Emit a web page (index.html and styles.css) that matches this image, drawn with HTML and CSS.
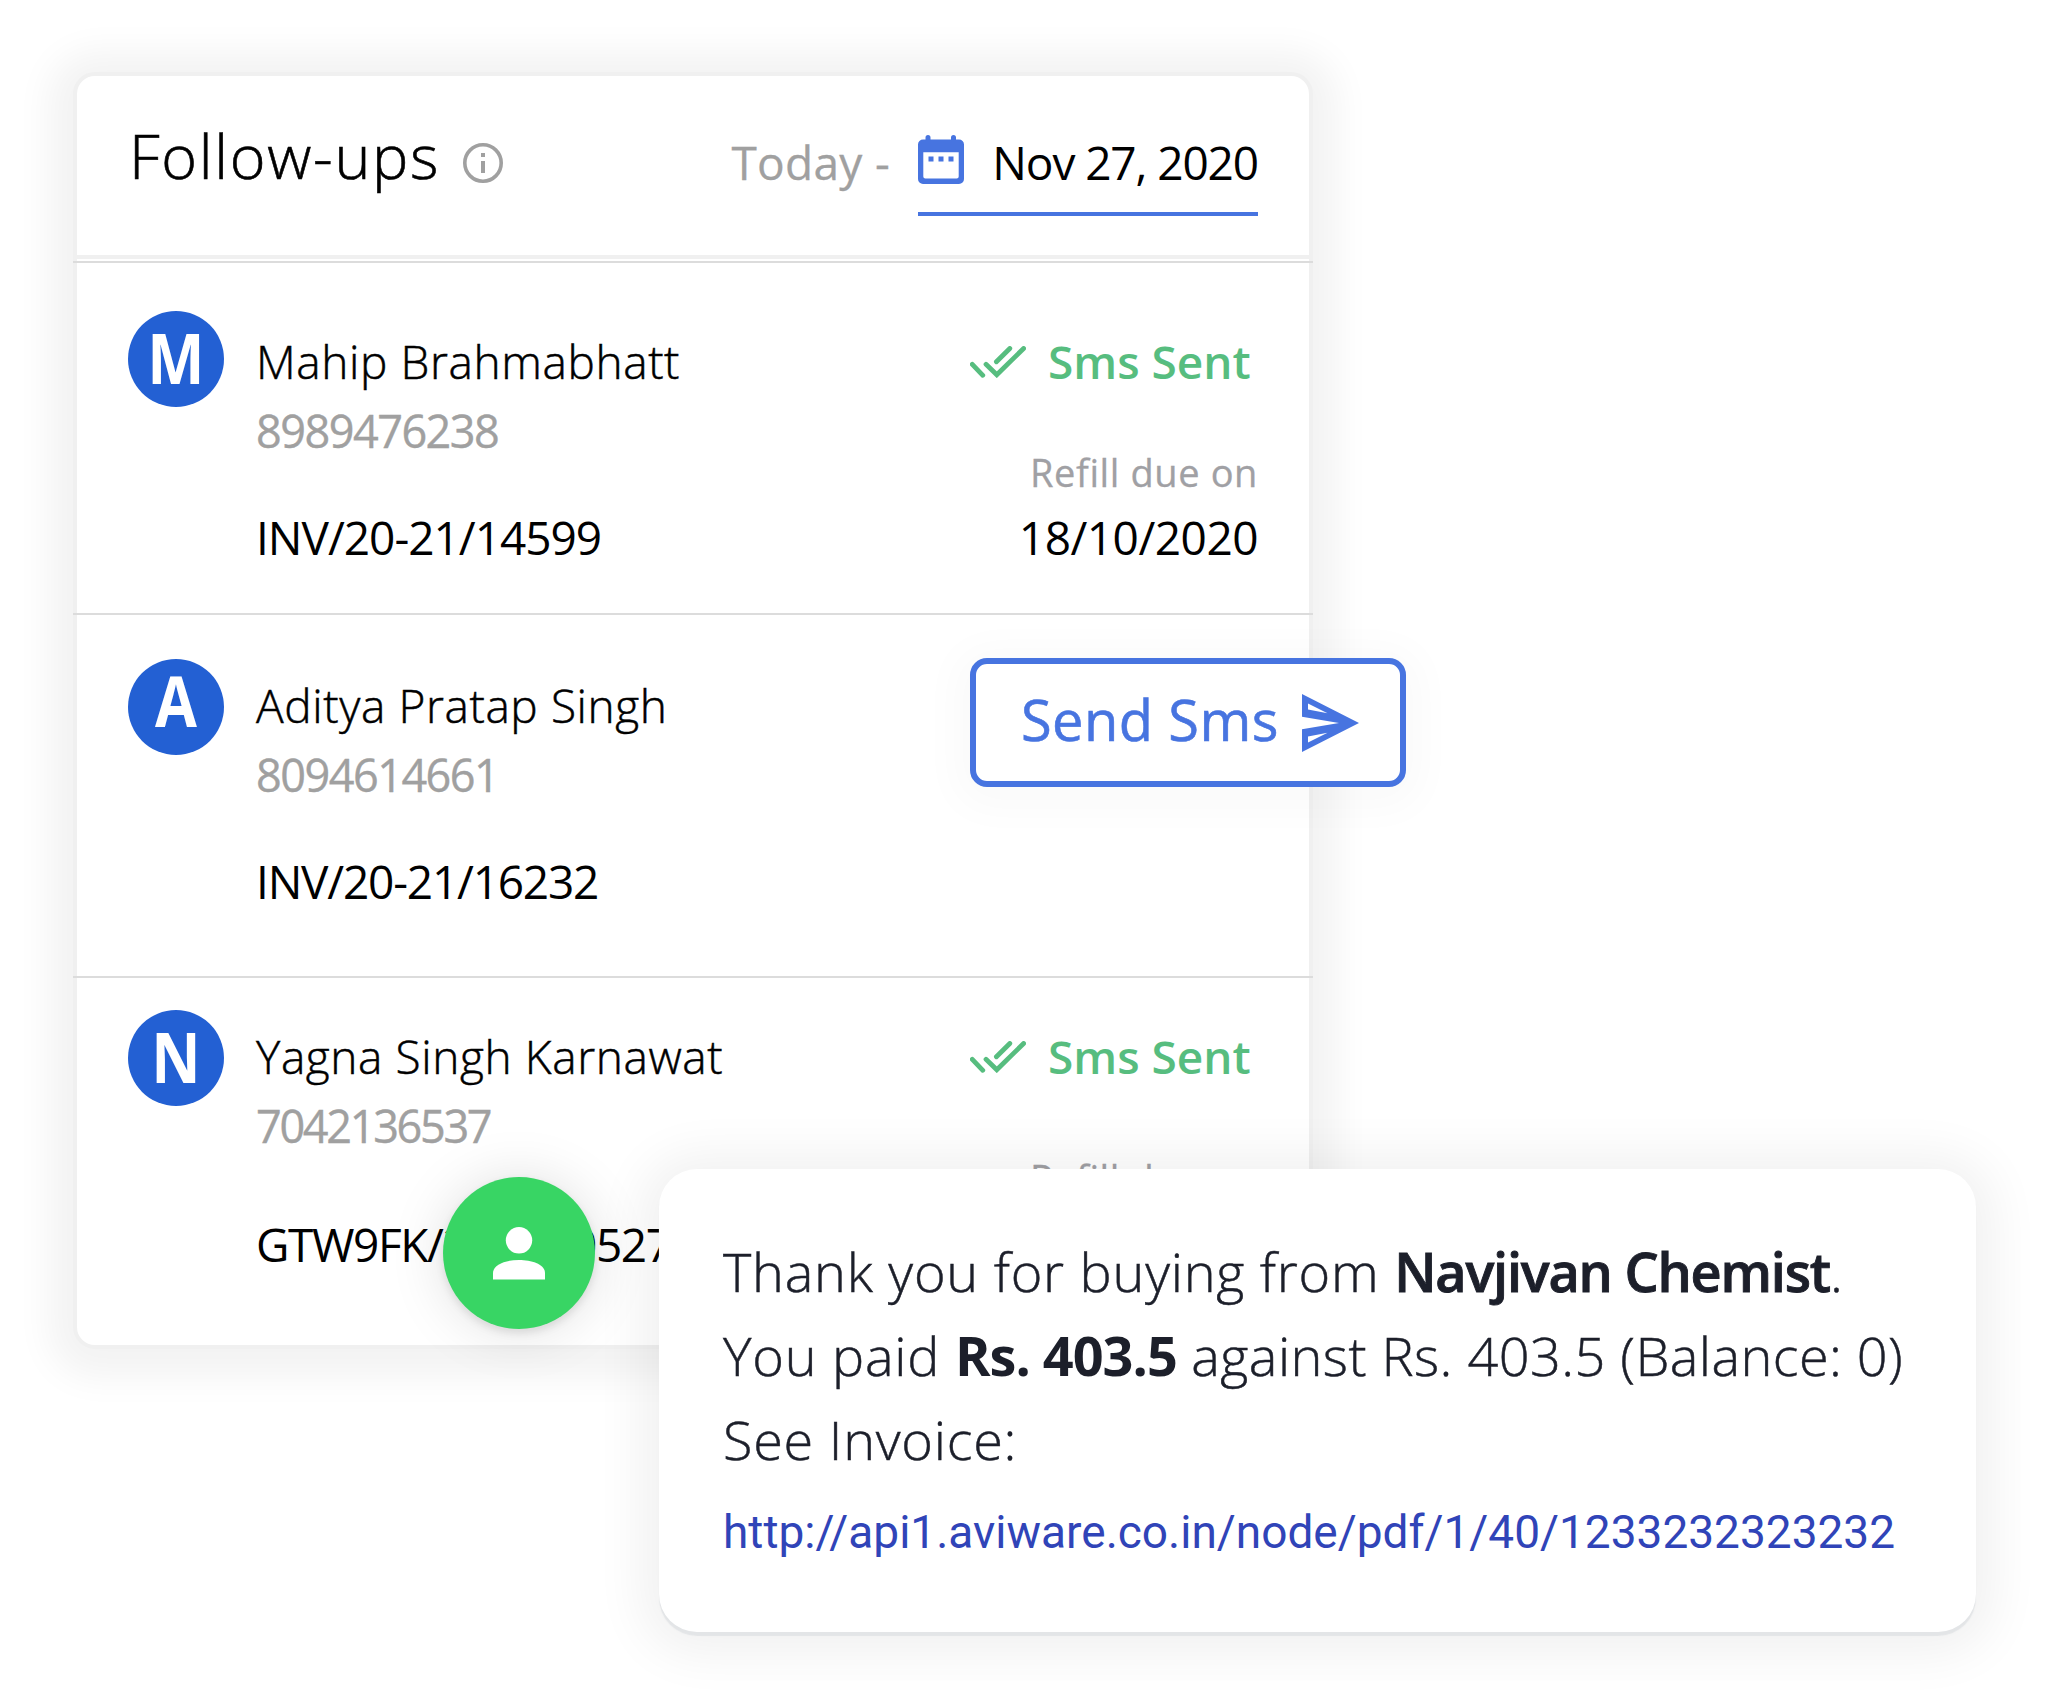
FILE: index.html
```html
<!DOCTYPE html>
<html lang="en">
<head>
<meta charset="utf-8">
<title>Follow-ups</title>
<link rel="stylesheet" href="styles.css">
</head>
<body>
<svg width="0" height="0" class="defs" aria-hidden="true">
  <symbol id="double-check" viewBox="0 0 56 32">
    <g fill="none" stroke="currentColor" stroke-width="4.8" stroke-linecap="round" stroke-linejoin="miter">
      <path d="M2.3 18.3 12.8 29.3"/>
      <path d="M16 18.3 26.8 28.8 53.6 2.5"/>
      <path d="M26.4 15.8 39.8 2.5"/>
    </g>
  </symbol>
</svg>
<main class="stage">
  <section class="card">
    <header class="card-header">
      <h1 class="title">Follow-ups</h1>
      <svg class="info-icon" viewBox="0 0 40 40" width="40" height="40">
        <circle cx="20" cy="20" r="18.2" fill="none" stroke="#a0a0a0" stroke-width="3.6"/>
        <rect x="18" y="18" width="4" height="12" fill="#a0a0a0"/>
        <rect x="18" y="10" width="4" height="4" fill="#a0a0a0"/>
      </svg>
      <span class="today">Today -</span>
      <div class="date-field">
        <svg class="calendar" viewBox="0 0 46 49" width="46" height="49" fill="#4774e0">
          <path fill-rule="evenodd" d="M7.5 4.5V2.5a2.5 2.5 0 0 1 5 0v2H33V2.5a2.5 2.5 0 0 1 5 0v2h3a5 5 0 0 1 5 5V44a5 5 0 0 1-5 5H5a5 5 0 0 1-5-5V9.500a5 5 0 0 1 5-5zM5.300 17.300V41.500a2 2 0 0 0 2 2H38.700a2 2 0 0 0 2-2V17.300z"/>
          <path d="M10.500 21.500h5v5h-5zM20.500 21.500h5v5h-5zM30.500 21.500h5v5h-5z"/>
        </svg>
        <span class="date">Nov 27, 2020</span>
      </div>
    </header>

    <article class="row row-1">
      <div class="avatar"><span>M</span></div>
      <div class="person">
        <div class="name">Mahip Brahmabhatt</div>
        <div class="phone">8989476238</div>
        <div class="invoice">INV/20-21/14599</div>
      </div>
      <div class="status">
        <div class="sent"><svg width="56" height="32"><use href="#double-check"/></svg><span>Sms Sent</span></div>
        <div class="due">Refill due on</div>
        <div class="due-date">18/10/2020</div>
      </div>
    </article>

    <article class="row row-2">
      <div class="avatar"><span>A</span></div>
      <div class="person">
        <div class="name">Aditya Pratap Singh</div>
        <div class="phone">8094614661</div>
        <div class="invoice">INV/20-21/16232</div>
      </div>
    </article>

    <article class="row row-3">
      <div class="avatar"><span>N</span></div>
      <div class="person">
        <div class="name">Yagna Singh Karnawat</div>
        <div class="phone">7042136537</div>
        <div class="invoice">GTW9FK/20-21/0527</div>
      </div>
      <div class="status">
        <div class="sent"><svg width="56" height="32"><use href="#double-check"/></svg><span>Sms Sent</span></div>
        <div class="due">Refill due on</div>
      </div>
    </article>
  </section>

  <button class="send">
    <span>Send Sms</span>
    <svg viewBox="0 0 57 58" width="57" height="58" fill="#4774e0">
      <path fill-rule="evenodd" d="M0 0 57 29 0 58V35.300L37 29 0 22.700zM6 9.500V15.500L25.500 19.300zM6 48.500V42.500L25.500 38.700z"/>
    </svg>
  </button>

  <div class="fab">
    <svg viewBox="0 0 52 53" width="52" height="53" fill="#fff">
      <circle cx="26" cy="13.300" r="13.200"/>
      <path d="M0 52.500V46C0 37.500 13 33 26 33s26 4.500 26 13v6.500z"/>
    </svg>
  </div>

  <section class="message">
    <p><span class="s1">Thank you for buying from </span><b class="shop">Navjivan Chemist</b>.</p>
    <p><span class="s1">You paid </span><b class="paid">Rs. 403.5</b><span class="s2"> against Rs. 403.5 (Balance: 0)</span></p>
    <p><span class="s1">See Invoice:</span></p>
    <a class="link">http://api1.aviware.co.in/node/pdf/1/40/1233232323232</a>
  </section>
</main>
</body>
</html>
```
FILE: styles.css
```css
* { box-sizing: border-box; }

body {
  margin: 0;
  background: #fff;
  color: #000;
  font-family: "Open Sans", "Noto Sans", sans-serif;
}

.defs { position: absolute; }

.stage {
  position: relative;
  width: 2048px;
  height: 1704px;
  padding: 72px 0 0 73px;
  overflow: hidden;
}

svg { display: block; flex: none; }

/* Follow-up list */
.card {
  width: 1240px;
  height: 1277px;
  border: 4px solid #f0f0f0;
  border-radius: 22px;
  background: #fff;
  box-shadow: 0 4px 36px 24px rgba(0, 0, 0, .05);
}

.card-header {
  display: flex;
  align-items: flex-start;
  height: 183px;
  padding: 0 51px 0 52px;
  border-bottom: 4px solid #f0f0f0;
  white-space: nowrap;
}

.title {
  width: 334px;
  margin: 39px 0 0;
  font-size: 61px;
  font-weight: 300;
  line-height: 82px;
  letter-spacing: 1.7px;
  -webkit-text-stroke: .6px;
}

.info-icon { margin-top: 67px; }

.today {
  margin: 52px 0 0 auto;
  color: #a0a0a0;
  font-size: 46px;
  line-height: 68px;
  letter-spacing: .3px;
  -webkit-text-stroke: .3px;
}

.date-field {
  display: flex;
  justify-content: space-between;
  width: 340px;
  height: 140px;
  margin-left: 28px;
  border-bottom: 4px solid #4774e0;
}

.calendar { margin-top: 59px; }

.date {
  margin-top: 52px;
  font-size: 46px;
  line-height: 68px;
  letter-spacing: -1.1px;
  font-weight: 500;
}

.row {
  display: flex;
  align-items: flex-start;
  margin: 0 -4px;
  border-top: 2px solid #dcdcdc;
  padding: 0 55px 0 55px;
  white-space: nowrap;
}

.row-1 { height: 352px; margin-top: 2px; padding-top: 48px; }
.row-2 { height: 363px; padding-top: 44px; }
.row-3 { height: 367px; padding-top: 32px; }

.avatar {
  width: 96px;
  height: 96px;
  border-radius: 50%;
  background: #2360d3;
  color: #fff;
  font-size: 69px;
  font-weight: 700;
  line-height: 92px;
  text-align: center;
}

.avatar span { display: block; transform: scaleX(.88); }
.row-2 .avatar { line-height: 82px; }

.person { margin: 16px 0 0 32px; }
.row-2 .person, .row-3 .person { margin-top: 12px; }

.name {
  font-size: 46px;
  font-weight: 300;
  line-height: 69px;
  letter-spacing: .6px;
  -webkit-text-stroke: .5px;
}

.phone {
  color: #a0a0a0;
  font-size: 45px;
  line-height: 69px;
  letter-spacing: -1.5px;
  -webkit-text-stroke: .4px;
}

.row-3 .phone { letter-spacing: -2.3px; }

.invoice {
  margin-top: 38px;
  font-size: 46px;
  font-weight: 500;
  line-height: 69px;
  letter-spacing: -1px;
}

.row-2 .invoice { letter-spacing: -1.2px; }
.row-3 .invoice { margin-top: 50px; letter-spacing: -1.4px; }

.status {
  width: 288px;
  margin: 16px 0 0 auto;
  text-align: right;
}

.row-3 .status { margin-top: 12px; }

.sent {
  display: flex;
  align-items: center;
  gap: 22px;
  color: #57bd7f;
  font-size: 46px;
  font-weight: 600;
  line-height: 69px;
}

.due {
  margin-top: 44px;
  color: #a0a0a4;
  font-size: 38px;
  line-height: 64px;
  letter-spacing: .6px;
  -webkit-text-stroke: .3px;
}

.row-3 .due { margin-top: 55px; }

.due-date {
  font-size: 46px;
  font-weight: 500;
  line-height: 67px;
  letter-spacing: -.5px;
}

/* Floating action */
.send {
  position: absolute;
  left: 970px;
  top: 658px;
  display: flex;
  align-items: center;
  gap: 23px;
  width: 436px;
  height: 129px;
  padding: 0 0 0 45px;
  border: 6px solid #4774e0;
  border-radius: 17px;
  background: #fff;
  box-shadow: 0 6px 40px 16px rgba(0, 0, 0, .025);
  color: #4774e0;
  font: 400 56px/76px "Open Sans", "Noto Sans", sans-serif;
  letter-spacing: .4px;
  -webkit-text-stroke: .6px;
  white-space: nowrap;
}

.send span { margin-top: -7px; }

/* Contact bubble */
.fab {
  position: absolute;
  left: 443px;
  top: 1177px;
  display: flex;
  align-items: center;
  justify-content: center;
  width: 152px;
  height: 152px;
  border-radius: 50%;
  background: #38d564;
  box-shadow: 0 4px 8px rgba(0, 0, 0, .1), 0 2px 56px rgba(0, 0, 0, .13);
}

/* Message preview */
.message {
  position: absolute;
  left: 659px;
  top: 1169px;
  width: 1317px;
  height: 463px;
  padding: 60px 0 0 64px;
  border-radius: 38px;
  background: #fff;
  box-shadow: 0 4px 1px #e3e5e7, 0 4px 50px 18px rgba(0, 0, 0, .06);
  color: #1c1f2a;
  font-size: 54px;
  font-weight: 300;
  line-height: 84px;
  white-space: nowrap;
}

.message p { margin: 0; white-space: pre; -webkit-text-stroke: .5px; }
.message b { font-weight: 600; }
.s1 { letter-spacing: .75px; }
.s2 { letter-spacing: .45px; }
.message .shop { letter-spacing: -1.2px; -webkit-text-stroke: .9px; }
.message .paid { font-weight: 700; letter-spacing: -1px; -webkit-text-stroke: 0; }

.link {
  display: block;
  margin-top: 9px;
  color: #3044b8;
  font: 400 46px/84px Roboto, sans-serif;
}
```
